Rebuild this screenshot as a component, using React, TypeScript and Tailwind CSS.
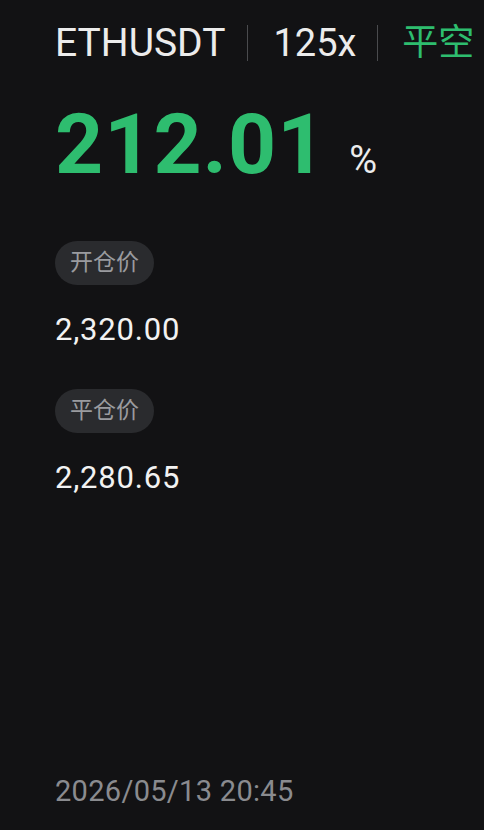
const font = { fontFamily: 'Roboto, "Noto Sans CJK SC", sans-serif' };

function Field({ label, value }: { label: string; value: string }) {
  return (
    <div className="flex flex-col items-start">
      <div className="h-[44px] px-[15px] rounded-full bg-[#2a2b2e] text-[#9a9b9f] text-[23px] flex items-center">
        {label}
      </div>
      <div className="mt-[29px] text-[31px] leading-none tracking-[0.8px] text-[#f2f2f2]">{value}</div>
    </div>
  );
}

export default function App() {
  return (
    <div className="w-[484px] h-[830px] bg-[#121214] overflow-hidden flex flex-col pl-[55px]" style={font}>
      <div className="flex items-center h-[40px] mt-[23px] text-[39px] leading-none">
        <span className="text-[#ececec]">ETHUSDT</span>
        <span className="w-px h-[36px] bg-[#4a4b4e] ml-[22px] mr-[25px]" />
        <span className="text-[#ececec] text-[38px]">125x</span>
        <span className="w-px h-[36px] bg-[#4a4b4e] ml-[21px] mr-[24px]" />
        <span className="text-[#2ebd6f] text-[36px]">平空</span>
      </div>
      <div className="flex items-baseline mt-[40px]">
        <span className="text-[84px] font-bold leading-none text-[#2ebd6f] tracking-[1px]">212.01</span>
        <span className="text-[38px] leading-none text-[#ececec] ml-[23px]">%</span>
      </div>
      <div className="mt-[54px]">
        <Field label="开仓价" value="2,320.00" />
      </div>
      <div className="mt-[44px]">
        <Field label="平仓价" value="2,280.65" />
      </div>
      <div className="mt-auto mb-[24px] text-[29px] leading-none tracking-[0.3px] text-[#8a8b8f]">2026/05/13 20:45</div>
    </div>
  );
}
